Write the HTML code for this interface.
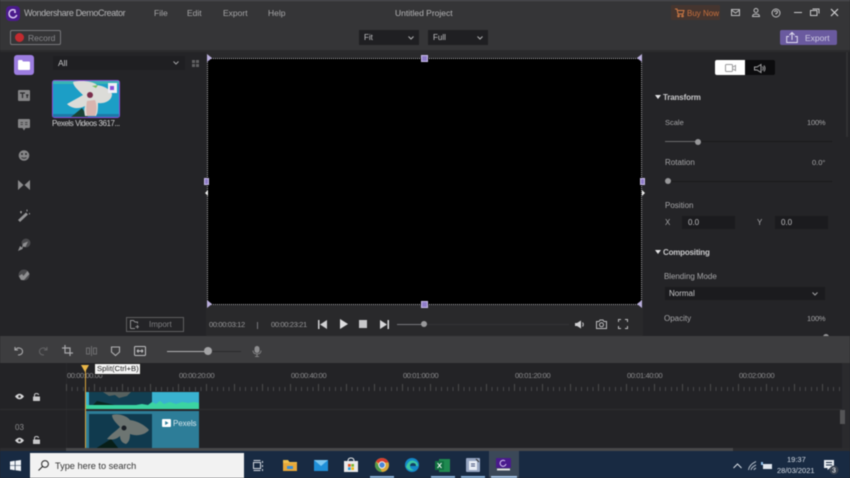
<!DOCTYPE html>
<html><head><meta charset="utf-8">
<style>
html,body{margin:0;padding:0;width:850px;height:478px;overflow:hidden;background:#242427}
*{box-sizing:border-box}
body{font-family:"Liberation Sans",sans-serif;position:relative}
#w{position:absolute;left:0;top:0;width:850px;height:478px;overflow:hidden;filter:blur(.4px)}
.a{position:absolute}
.t{position:absolute;white-space:nowrap;color:#a5a5a7;font-size:8px;line-height:10px}
.tc{font-size:7.5px;letter-spacing:-.4px;color:#8c8c8e;top:371px}
svg{position:absolute;overflow:visible}
.h{position:absolute;width:7px;height:7px;background:#8f7cc8;border:1px solid #c9bdea}
.tri{position:absolute;width:0;height:0}
.field{position:absolute;background:#1b1b1e;height:13px}
</style></head><body><div id="w">
<!-- top chrome -->
<div class="a" style="left:0;top:0;width:850px;height:51px;background:#353537"></div>
<div class="a" style="left:0;top:0;width:850px;height:1px;background:#55555a"></div>
<div class="a" style="left:0;top:50px;width:850px;height:2px;background:#2b2b2d"></div>
<div class="a" style="left:6px;top:6px;width:14px;height:15px;border-radius:4px;background:#4a1a8c"></div>
<svg style="left:6px;top:6px" width="14" height="15"><path d="M9.5 4.6A4 4 0 1 0 10.8 9" fill="none" stroke="#d9c8f5" stroke-width="1.5"/><circle cx="9" cy="6" r="1" fill="#e9defa"/></svg>
<div class="t" style="left:24px;top:8px;font-size:9px;letter-spacing:-.4px;color:#b4b4b6">Wondershare DemoCreator</div>
<div class="t" style="left:154px;top:8px;font-size:8.5px">File</div>
<div class="t" style="left:187px;top:8px;font-size:8.5px">Edit</div>
<div class="t" style="left:223px;top:8px;font-size:8.5px">Export</div>
<div class="t" style="left:268px;top:8px;font-size:8.5px">Help</div>
<div class="t" style="left:395px;top:8px;font-size:8.5px;color:#b4b4b6">Untitled Project</div>
<div class="a" style="left:671px;top:5px;width:49px;height:15px;background:#45352f;border-radius:1px"></div>
<svg style="left:675px;top:8px" width="10" height="10" fill="none" stroke="#d07a45" stroke-width="1"><path d="M0 1H2L3 6H8L9 2.500H2.500"/><circle cx="3.500" cy="8" r=".8"/><circle cx="7.500" cy="8" r=".8"/></svg>
<div class="t" style="left:687px;top:9px;font-size:8px;color:#c8703e">Buy Now</div>
<svg style="left:731px;top:8px" width="10" height="9" fill="none" stroke="#bdbdbf"><path d="M.5 1.500H8.500V7.500H.5Z"/><path d="M1 2.500L4.500 5L8 2.500"/></svg>
<svg style="left:751px;top:8px" width="10" height="10" fill="none" stroke="#bdbdbf"><circle cx="5" cy="2.500" r="2"/><path d="M1.500 8.500Q1.500 6 5 6T8.500 8.500Z"/></svg>
<svg style="left:771px;top:8px" width="10" height="10" fill="none" stroke="#bdbdbf"><circle cx="5" cy="5" r="4"/><path d="M3.500 4Q3.500 2.700 5 2.700T6.500 4T5 5.500V6.500"/></svg>
<div class="a" style="left:794px;top:12px;width:8px;height:1px;background:#c8c8ca"></div>
<svg style="left:810px;top:8px" width="10" height="9" fill="none" stroke="#c8c8ca"><path d="M.5 2.500H7V7.500H.5Z"/><path d="M2.500 1H9V5.500"/></svg>
<svg style="left:830px;top:8px" width="9" height="9" stroke="#d0d0d2" stroke-width="1.200"><path d="M1 1L8 8M8 1L1 8"/></svg>

<div class="a" style="left:10px;top:30px;width:51px;height:15px;border:1px solid #77777a;border-radius:2px"></div>
<div class="a" style="left:15px;top:33px;width:9px;height:9px;border-radius:50%;background:#c32b30"></div>
<div class="t" style="left:28px;top:33px;font-size:8.5px;color:#86868a">Record</div>
<div class="a" style="left:359px;top:30px;width:60px;height:15px;background:#1f1f22"></div>
<div class="t" style="left:364px;top:33px;color:#c0c0c2">Fit</div>
<svg style="left:408px;top:35.500px" width="6" height="4" fill="none" stroke="#b0b0b2"><path d="M.5 .5L3 3L5.500 .5"/></svg>
<div class="a" style="left:428px;top:30px;width:60px;height:15px;background:#1f1f22"></div>
<div class="t" style="left:433px;top:33px;color:#c0c0c2">Full</div>
<svg style="left:477px;top:35.500px" width="6" height="4" fill="none" stroke="#b0b0b2"><path d="M.5 .5L3 3L5.500 .5"/></svg>
<div class="a" style="left:780px;top:30px;width:57px;height:15px;background:#6a5a9f;border-radius:2px"></div>
<svg style="left:786px;top:31px" width="12" height="13" fill="none" stroke="#e0dcef"><path d="M6 9V1.500M3.500 4L6 1.500L8.500 4M3 5.500H.7V11.500H11.300V5.500H9"/></svg>
<div class="t" style="left:805px;top:33px;font-size:8.5px;color:#cfcbe2">Export</div>

<!-- left sidebar icons -->
<div class="a" style="left:14px;top:55px;width:20px;height:20px;background:#9c7de0;border-radius:3px"></div>
<svg style="left:18px;top:60px" width="12" height="10"><path d="M0 1Q0 0 1 0H4L5 1.500H11Q12 1.500 12 2.500V9Q12 10 11 10H1Q0 10 0 9Z" fill="#fff"/></svg>
<svg style="left:18px;top:90px" width="12" height="11"><rect width="12" height="11" rx="1" fill="#858587"/><path d="M2 3H7M4.500 3V8M8 5H10.500M9.200 5V8" stroke="#2a2a2c" stroke-width="1.200"/></svg>
<svg style="left:18px;top:119px" width="12" height="12"><path d="M1 0H11Q12 0 12 1V8Q12 9 11 9H7.500L6 11.500L4.500 9H1Q0 9 0 8V1Q0 0 1 0Z" fill="#858587"/><path d="M2.500 3.500H5M7 3.500H9.500M2.500 5.500H5M7 5.500H9.500" stroke="#333" stroke-width=".8"/></svg>
<svg style="left:18px;top:150px" width="12" height="11"><circle cx="6" cy="5.500" r="5.300" fill="#858587"/><circle cx="4" cy="4" r="1" fill="#2d2d2f"/><circle cx="8" cy="4" r="1" fill="#2d2d2f"/><path d="M3.500 7.500Q6 9 8.500 7.500" stroke="#2d2d2f" fill="none"/></svg>
<svg style="left:18px;top:180px" width="12" height="10" fill="#8c8c8e"><path d="M0 0L5.500 5L0 10ZM12 0L6.500 5L12 10Z"/></svg>
<svg style="left:17px;top:209px" width="14" height="13"><path d="M1 11L9 3.500L11 5.500L3 13Z" fill="#949496"/><path d="M10 .5V2.500M12.500 4V5.500M4 2V4.500M3 3H5" stroke="#949496"/></svg>
<svg style="left:17px;top:238px" width="14" height="14"><circle cx="9" cy="5" r="4.500" fill="#5a5a5c" opacity=".7"/><path d="M1 13L3 8L5 9.500L6 5.500L11 3.500L8.500 9L6 8.500L5.500 11Z" fill="#8f8f91"/></svg>
<svg style="left:17px;top:268px" width="14" height="14"><circle cx="7" cy="7" r="5.500" fill="#5a5a5c" opacity=".7"/><path d="M4 12L2 8L5 6L6.500 8L10.500 3L12.500 6L7 12Z" fill="#8f8f91"/></svg>

<!-- media panel -->
<div class="a" style="left:53px;top:56px;width:132px;height:14px;background:#1f1f22"></div>
<div class="t" style="left:58px;top:58px;color:#c6c6c8;font-size:8.5px">All</div>
<svg style="left:173px;top:61px" width="6" height="4" fill="none" stroke="#a0a0a2"><path d="M.5 .5L3 3L5.500 .5"/></svg>
<svg style="left:192px;top:60px" width="7" height="7" fill="#606062"><rect width="3" height="3"/><rect x="4" width="3" height="3"/><rect y="4" width="3" height="3"/><rect x="4" y="4" width="3" height="3"/></svg>
<svg style="left:52px;top:80px" width="68" height="38">
<rect x=".5" y=".5" width="67" height="37" rx="2" fill="#1c9ec6" stroke="#8a50d8"/>
<path d="M1 1H67V4H1Z" fill="#3ab4b4"/>
<path d="M1 34H67V37H1Z" fill="#1e78a8"/>
<path d="M19 37L30 28L36 37Z" fill="#1a4236"/>
<path d="M21 2C28 0 41 1 45 5C52 6 58 9 60 14C60 21 52 24 46 23C46 28 46 33 44 36H33C32 32 32 29 33 26C26 30 19 28 15 24C20 21 26 18 31 15C27 11 21 6 21 2Z" fill="#dcdcd8"/>
<path d="M35 21C34 27 34 32 35 36H43C45 31 45 25 43 20Z" fill="#d8b4ae"/>
<circle cx="38" cy="15" r="3" fill="#7a2e4c"/>
<path d="M40 6L46 5L44 8Z" fill="#78c060"/>
<rect x="56" y="3" width="9" height="10" fill="#eeeef6"/>
<rect x="58" y="6" width="4" height="4" fill="#8a50d8"/>
</svg>
<div class="t" style="left:52px;top:119px;font-size:8px;letter-spacing:-.45px;color:#d0d0d2">Pexels Videos 3617...</div>
<div class="a" style="left:126px;top:317px;width:58px;height:15px;border:1px solid #5e5e60"></div>
<svg style="left:130px;top:320px" width="10" height="9" fill="none" stroke="#8c8c8e"><path d="M.5 8.500V.5H3.500L5 2H7.500V3.500M.5 8.500H5M7.500 5V8.500M5.500 6.700H9"/></svg>
<div class="t" style="left:149px;top:320px;color:#7e7e80">Import</div>

<!-- preview -->
<div class="a" style="left:206px;top:52px;width:437px;height:284px;background:#29292b"></div>
<div class="a" style="left:207px;top:58px;width:435px;height:247px;background:#000;border:1px dotted #b4b4ba"></div>
<div class="h" style="left:421px;top:55px"></div>
<div class="h" style="left:421px;top:301px"></div>
<div class="h" style="left:204px;top:178px;width:5px;background:#8f7cc8"></div>
<div class="h" style="left:640px;top:178px;width:5px"></div>
<div class="tri" style="left:207px;top:54px;border-left:5px solid #b9aedc;border-top:4px solid transparent;border-bottom:4px solid transparent"></div>
<div class="tri" style="left:637px;top:54px;border-right:5px solid #b9aedc;border-top:4px solid transparent;border-bottom:4px solid transparent"></div>
<div class="tri" style="left:207px;top:300px;border-left:5px solid #b9aedc;border-top:4px solid transparent;border-bottom:4px solid transparent"></div>
<div class="tri" style="left:637px;top:300px;border-right:5px solid #b9aedc;border-top:4px solid transparent;border-bottom:4px solid transparent"></div>
<div class="tri" style="left:205px;top:190px;border-right:3px solid #eee;border-top:3px solid transparent;border-bottom:3px solid transparent"></div>
<div class="tri" style="left:642px;top:190px;border-left:3px solid #eee;border-top:3px solid transparent;border-bottom:3px solid transparent"></div>

<!-- transport -->
<div class="t" style="left:209px;top:320px;font-size:7.5px;letter-spacing:-.35px;color:#98989a">00:00:03:12</div>
<div class="a" style="left:257px;top:322px;width:1px;height:7px;background:#77777a"></div>
<div class="t" style="left:271px;top:320px;font-size:7.5px;letter-spacing:-.35px;color:#98989a">00:00:23:21</div>
<svg style="left:318px;top:320px" width="9" height="9" fill="#d0d0d2"><rect width="1.500" height="9"/><path d="M9 0V9L2 4.500Z"/></svg>
<svg style="left:340px;top:319px" width="8" height="10" fill="#dedee0"><path d="M0 0L8 5L0 10Z"/></svg>
<div class="a" style="left:359px;top:320px;width:8px;height:8px;background:#c8c8ca"></div>
<svg style="left:380px;top:320px" width="9" height="9" fill="#d8d8da"><path d="M0 0V9L7 4.500Z"/><rect x="7.500" width="1.500" height="9"/></svg>
<div class="a" style="left:397px;top:324px;width:27px;height:1px;background:#77777a"></div>
<div class="a" style="left:424px;top:324px;width:145px;height:1px;background:#333336"></div>
<div class="a" style="left:421px;top:321px;width:6px;height:6px;border-radius:50%;background:#9a9a9c"></div>
<svg style="left:575px;top:320px" width="10" height="9" fill="#d0d0d2"><path d="M0 3H2L6 .5V8.500L2 6H0Z"/><path d="M7.500 2.500Q9 4.500 7.500 6.500" stroke="#d0d0d2" fill="none"/></svg>
<svg style="left:596px;top:319px" width="11" height="10" fill="none" stroke="#bcbcbe"><path d="M.5 2.500H3L4 1H7L8 2.500H10.500V9.500H.5Z"/><circle cx="5.500" cy="5.800" r="2"/></svg>
<svg style="left:618px;top:319px" width="10" height="10" fill="none" stroke="#bcbcbe"><path d="M.5 3V.5H3M7 .5H9.500V3M9.500 7V9.500H7M3 9.500H.5V7"/></svg>

<!-- right panel -->
<div class="a" style="left:715px;top:60px;width:30px;height:15px;background:#fff;border-radius:2px 0 0 2px"></div>
<div class="a" style="left:745px;top:60px;width:30px;height:15px;background:#0c0c0e;border-radius:0 2px 2px 0"></div>
<svg style="left:725px;top:64px" width="11" height="8" fill="none" stroke="#9a9a9c"><rect x=".5" y=".5" width="7" height="7" rx="1"/><path d="M8 3L10.500 1.500V6.500L8 5"/></svg>
<svg style="left:754px;top:64px" width="12" height="9" fill="none" stroke="#a0a0a2"><path d="M.5 3H3L7 .5V8.500L3 6H.5Z"/><path d="M8.500 2.500Q10 4.500 8.500 6.500M10 1.500Q12 4.500 10 7.500"/></svg>
<div class="tri" style="left:655px;top:95px;border-top:4px solid #e4e4e6;border-left:3px solid transparent;border-right:3px solid transparent"></div>
<div class="t" style="left:663px;top:93px;font-weight:bold;letter-spacing:-.15px;color:#c8c8ca">Transform</div>
<div class="t" style="left:665px;top:118px;font-size:7.5px">Scale</div>
<div class="t" style="left:807px;top:118px;font-size:7.5px;letter-spacing:-.2px">100%</div>
<div class="a" style="left:665px;top:141px;width:33px;height:1px;background:#6a6a6c"></div>
<div class="a" style="left:698px;top:141px;width:134px;height:1px;background:#19191b"></div>
<div class="a" style="left:695px;top:139px;width:6px;height:6px;border-radius:50%;background:#98989a"></div>
<div class="t" style="left:665px;top:158px">Rotation</div>
<div class="t" style="left:812px;top:158px;font-size:7.5px">0.0°</div>
<div class="a" style="left:668px;top:181px;width:164px;height:1px;background:#19191b"></div>
<div class="a" style="left:665px;top:178px;width:6px;height:6px;border-radius:50%;background:#98989a"></div>
<div class="t" style="left:665px;top:201px">Position</div>
<div class="t" style="left:665px;top:218px">X</div>
<div class="field" style="left:682px;top:216px;width:53px"></div>
<div class="t" style="left:688px;top:218px;color:#bdbdbf">0.0</div>
<div class="t" style="left:757px;top:218px">Y</div>
<div class="field" style="left:775px;top:216px;width:53px"></div>
<div class="t" style="left:781px;top:218px;color:#bdbdbf">0.0</div>
<div class="tri" style="left:655px;top:250px;border-top:4px solid #e4e4e6;border-left:3px solid transparent;border-right:3px solid transparent"></div>
<div class="t" style="left:663px;top:248px;font-weight:bold;letter-spacing:-.2px;color:#c8c8ca">Compositing</div>
<div class="t" style="left:664px;top:272px;letter-spacing:-.05px">Blending Mode</div>
<div class="field" style="left:665px;top:287px;width:160px"></div>
<div class="t" style="left:669px;top:289px;color:#c8c8ca">Normal</div>
<svg style="left:812px;top:292px" width="6" height="4" fill="none" stroke="#a0a0a2"><path d="M.5 .5L3 3L5.500 .5"/></svg>
<div class="t" style="left:664px;top:314px">Opacity</div>
<div class="t" style="left:807px;top:314px;font-size:7.5px;letter-spacing:-.2px">100%</div>
<div class="a" style="left:823px;top:334px;width:6px;height:3px;border-radius:3px 3px 0 0;background:#98989a"></div>
<div class="a" style="left:846px;top:52px;width:2px;height:85px;background:#303032"></div>

<!-- timeline toolbar -->
<div class="a" style="left:0;top:336px;width:850px;height:27px;background:#3d3d3f"></div>
<svg style="left:14px;top:346px" width="10" height="10" fill="none" stroke="#a8a8aa" stroke-width="1.100"><path d="M1 1V4H4M1 4Q3 1.500 5.500 2Q9 3 8.500 6Q8 9 4 9"/></svg>
<svg style="left:38px;top:346px" width="10" height="10" fill="none" stroke="#626264" stroke-width="1.100"><path d="M9 1V4H6M9 4Q7 1.500 4.500 2Q1 3 1.500 6Q2 9 6 9"/></svg>
<svg style="left:62px;top:345px" width="11" height="11" fill="none" stroke="#a8a8aa" stroke-width="1.200"><path d="M3 0V8H11M0 3H8V11"/></svg>
<svg style="left:86px;top:346px" width="11" height="10" fill="none" stroke="#6e6e70"><path d="M5.500 0V10M.5 2H3.500V8H.5ZM7.500 2H10.500V8H7.500Z"/></svg>
<svg style="left:111px;top:346px" width="9" height="10" fill="none" stroke="#b0b0b2" stroke-width="1.100"><path d="M.5 1H8.500V6L4.500 9.500L.5 6Z"/></svg>
<svg style="left:134px;top:346px" width="12" height="10" fill="none" stroke="#c0c0c2"><rect x=".5" y=".5" width="11" height="9" rx="1"/><path d="M3 5H9M3 5L4.500 3.500M3 5L4.500 6.500M9 5L7.500 3.500M9 5L7.500 6.500"/></svg>
<div class="a" style="left:167px;top:351px;width:41px;height:1px;background:#b0b0b2"></div>
<div class="a" style="left:208px;top:351px;width:33px;height:1px;background:#2b2b2d"></div>
<div class="a" style="left:204px;top:347px;width:8px;height:8px;border-radius:50%;background:#a4a4a6"></div>
<svg style="left:253px;top:346px" width="8" height="11" fill="#8e8e90"><rect x="1.500" width="5" height="7" rx="2.500"/><path d="M0 4.500Q0 8 4 8T8 4.500M4 8V11M2 10.500H6" fill="none" stroke="#8e8e90" stroke-width=".8"/></svg>

<!-- timeline -->
<div class="a" style="left:0;top:363px;width:850px;height:88px;background:#232326"></div>
<div class="a" style="left:66px;top:363px;width:1px;height:86px;background:#29292c"></div>
<div class="t tc" style="left:67px">00:00:00:00</div>
<div class="t tc" style="left:179px">00:00:20:00</div>
<div class="t tc" style="left:291px">00:00:40:00</div>
<div class="t tc" style="left:403px">00:01:00:00</div>
<div class="t tc" style="left:515px">00:01:20:00</div>
<div class="t tc" style="left:627px">00:01:40:00</div>
<div class="t tc" style="left:739px">00:02:00:00</div>
<div class="a" style="left:66px;top:387px;width:780px;height:4px;background:repeating-linear-gradient(90deg,#48484a 0 1px,transparent 1px 5.600px)"></div>
<div class="a" style="left:66px;top:384px;width:780px;height:7px;background:repeating-linear-gradient(90deg,#4c4c4e 0 1px,transparent 1px 28px)"></div>
<div class="a" style="left:0;top:409px;width:842px;height:1px;background:#2e2e31"></div>
<!-- clips -->
<div class="a" style="left:86px;top:392px;width:113px;height:17px;background:#39b2cf"></div>
<div class="a" style="left:89px;top:392px;width:63px;height:13px;background:#123f52"></div>
<svg style="left:89px;top:392px" width="63" height="13"><path d="M14 0H42L38 4L30 6L26 3L20 4Z" fill="#56615f"/><path d="M8 9L26 13H4Z" fill="#0a2520"/></svg>
<svg style="left:86px;top:400px" width="113" height="9"><path d="M0 5H50L56 4L62 5L66 2L70 4L74 1L78 4L84 2L90 4L96 2L102 3L108 2L113 3V9H0Z" fill="#3bd4a2"/></svg>
<div class="a" style="left:86px;top:411px;width:113px;height:38px;background:#2d7d98"></div>
<div class="a" style="left:89px;top:414px;width:63px;height:35px;background:#103a4e"></div>
<svg style="left:89px;top:414px" width="63" height="35">
<path d="M6 35L22 25L30 35Z" fill="#071e18"/>
<path d="M23 1C30 -1 38 2 41 6C48 7 56 11 60 16C55 22 46 22 41 20C41 25 40 28 37 30C33 29 31 26 31 22C27 26 22 26 18 25C22 20 27 17 31 13C27 9 23 5 23 1Z" fill="#6d7572"/>
<circle cx="35" cy="14" r="2.500" fill="#1a1f25"/></svg>
<svg style="left:162px;top:419px" width="9" height="8"><rect width="9" height="8" rx="1" fill="#fff"/><path d="M3.200 2L6.500 4L3.200 6Z" fill="#2d7d98"/></svg>
<div class="t" style="left:173px;top:419px;font-size:8px;letter-spacing:-.1px;color:#d6e6ec">Pexels</div>
<!-- playhead -->
<div class="a" style="left:84.500px;top:368px;width:1.500px;height:81px;background:#d9a43a"></div>
<div class="tri" style="left:81px;top:365px;border-top:7px solid #e9b648;border-left:4px solid transparent;border-right:4px solid transparent"></div>
<!-- tooltip -->
<div class="a" style="left:94px;top:363px;width:47px;height:12px;background:#f4f4f4;border:1px solid #222"></div>
<div class="t" style="left:97px;top:364px;font-size:7.7px;color:#222">Split(Ctrl+B)</div>
<!-- track icons -->
<svg style="left:15px;top:393px" width="9" height="7"><path d="M0 3.500Q4.500 -2 9 3.500Q4.500 9 0 3.500Z" fill="#d6d6d8"/><circle cx="4.500" cy="3.500" r="1.300" fill="#333"/></svg>
<svg style="left:33px;top:393px" width="7" height="8"><rect y="3.500" width="7" height="4.500" rx=".5" fill="#c8c8ca"/><path d="M1.500 3.500V2Q1.500 .5 3.500 .5T5.500 2" fill="none" stroke="#c8c8ca"/></svg>
<div class="t" style="left:15px;top:423px;font-size:8px;color:#8a8a8c">03</div>
<svg style="left:15px;top:437px" width="9" height="7"><path d="M0 3.500Q4.500 -2 9 3.500Q4.500 9 0 3.500Z" fill="#d6d6d8"/><circle cx="4.500" cy="3.500" r="1.300" fill="#333"/></svg>
<svg style="left:33px;top:436px" width="7" height="8"><rect y="3.500" width="7" height="4.500" rx=".5" fill="#c8c8ca"/><path d="M1.500 3.500V2Q1.500 .5 3.500 .5T5.500 2" fill="none" stroke="#c8c8ca"/></svg>
<!-- scrollbars -->
<div class="a" style="left:842px;top:363px;width:8px;height:88px;background:#2a2a2d"></div>
<div class="a" style="left:840px;top:410px;width:5px;height:14px;background:#545456"></div>
<div class="a" style="left:66px;top:448px;width:667px;height:3px;background:#48484a"></div>
<div class="a" style="left:0;top:448px;width:66px;height:3px;background:#2c2c2f"></div>
<div class="a" style="left:733px;top:448px;width:117px;height:3px;background:#2c2c2f"></div>

<!-- taskbar -->
<div class="a" style="left:0;top:451px;width:850px;height:27px;background:#182a42"></div>
<svg style="left:10px;top:460px" width="11" height="11" fill="#f0f4f8"><path d="M0 1.500L4.800 .8V5.200H0ZM5.500 .7L11 0V5.200H5.500ZM0 5.800H4.800V10.200L0 9.500ZM5.500 5.800H11V11L5.500 10.300Z"/></svg>
<div class="a" style="left:30px;top:453px;width:214px;height:25px;background:#f2f2f2"></div>
<svg style="left:38px;top:460px" width="11" height="11" fill="none" stroke="#222"><circle cx="7" cy="4" r="3.400"/><path d="M4.500 6.500L.5 10.500"/></svg>
<div class="t" style="left:55px;top:460px;font-size:9.2px;line-height:12px;color:#333">Type here to search</div>
<svg style="left:253px;top:460px" width="11" height="11" fill="none" stroke="#d4dae2"><path d="M.5 2.500H7.500V8.500H.5ZM.5 .5H7.500M.5 10.500H7.500M9.500 1V3M9.500 5V7M9.500 9V11"/></svg>
<svg style="left:283px;top:459px" width="15" height="13"><path d="M0 1H5L6.500 3H14V12H0Z" fill="#f2c14e"/><rect y="4" width="14" height="8" fill="#e8a93a"/><rect x="4" y="7" width="6" height="3" fill="#3a8fd8"/></svg>
<svg style="left:314px;top:460px" width="14" height="11"><rect width="14" height="11" y="0" fill="#1f8fd8"/><path d="M0 0L7 6L14 0Z" fill="#7cc8f2"/></svg>
<svg style="left:344px;top:458px" width="14" height="14"><path d="M4 3Q4 0 7 0T10 3" fill="none" stroke="#eee"/><rect y="3" width="14" height="11" fill="#e9e9ea"/><rect x="4" y="6" width="2.700" height="2.700" fill="#e8501f"/><rect x="7.300" y="6" width="2.700" height="2.700" fill="#7db82c"/><rect x="4" y="9.300" width="2.700" height="2.700" fill="#2a9fe0"/><rect x="7.300" y="9.300" width="2.700" height="2.700" fill="#f5b90e"/></svg>
<svg style="left:375px;top:458px" width="14" height="14"><circle cx="7" cy="7" r="7" fill="#d9a93a"/><path d="M7 7L1 3.500A7 7 0 0 1 13.500 4.500H7Z" fill="#d63b30"/><path d="M7 14A7 7 0 0 1 1 3.500L4.500 9.500Z" fill="#4d9a4d"/><circle cx="7" cy="7" r="3.200" fill="#4a86d8" stroke="#eee"/></svg>
<svg style="left:405px;top:458px" width="14" height="14"><circle cx="7" cy="7" r="7" fill="#1488c8"/><path d="M1 9Q3 2 8 2.500Q13 3.500 13 8H5Q5 11 9 12Q4 13.500 1 9Z" fill="#3dc8a2"/><path d="M5 8Q5 5 8 5T11 8Z" fill="#123e62"/></svg>
<svg style="left:435px;top:459px" width="15" height="13"><rect x="4" width="11" height="13" fill="#1f8a50"/><rect y="2" width="9" height="9" fill="#107040"/><path d="M2.500 4L6.500 9M6.500 4L2.500 9" stroke="#fff"/></svg>
<svg style="left:466px;top:458px" width="14" height="14"><rect width="14" height="14" rx="1" fill="#97a6c2"/><rect x="3" y="3" width="8" height="9" fill="#e8edf5"/><path d="M5 6H9M5 8H9" stroke="#46527a"/><path d="M10 1L13 4" stroke="#333"/></svg>
<div class="a" style="left:489px;top:451px;width:30px;height:27px;background:#3b4858"></div>
<svg style="left:496px;top:458px" width="15" height="13"><rect width="15" height="10" rx="1" fill="#4a1a8c"/><rect x="1" y="10.500" width="13" height="2" fill="#ddd"/><path d="M9 3A3 3 0 1 0 10 6" fill="none" stroke="#d9c8f5"/></svg>
<div class="a" style="left:370px;top:476px;width:24px;height:2px;background:#8bb4dc"></div>
<div class="a" style="left:431px;top:476px;width:24px;height:2px;background:#8bb4dc"></div>
<div class="a" style="left:461px;top:476px;width:24px;height:2px;background:#8bb4dc"></div>
<div class="a" style="left:491px;top:476px;width:26px;height:2px;background:#a8c8ea"></div>
<svg style="left:733px;top:463px" width="9" height="6" fill="none" stroke="#d8dee6"><path d="M.5 5L4.500 1L8.500 5"/></svg>
<svg style="left:748px;top:461px" width="9" height="10" fill="none" stroke="#aeb8c4"><path d="M.5 9Q1 4 8 .5M3 9Q3.500 6 8 4M6 9Q6 8 8 7"/></svg>
<svg style="left:761px;top:462px" width="11" height="8"><rect x="2" y="2" width="9" height="5" fill="#e0e6ee"/><rect y="0" width="2" height="3" fill="#8fc0ea"/></svg>
<div class="t" style="left:787px;top:455px;font-size:7.5px;color:#d6dde6">19:37</div>
<div class="t" style="left:777px;top:466px;font-size:7.5px;color:#d6dde6">28/03/2021</div>
<svg style="left:824px;top:460px" width="16" height="15"><path d="M0 0H10V8H6L3.500 10V8H0Z" fill="#e8edf2"/><path d="M2 2.500H8M2 5H8" stroke="#182a42"/><circle cx="10" cy="10" r="4.500" fill="#3a4452"/><text x="10" y="12.500" font-size="7" font-family="Liberation Sans" fill="#fff" text-anchor="middle">3</text></svg>
</div></body></html>
